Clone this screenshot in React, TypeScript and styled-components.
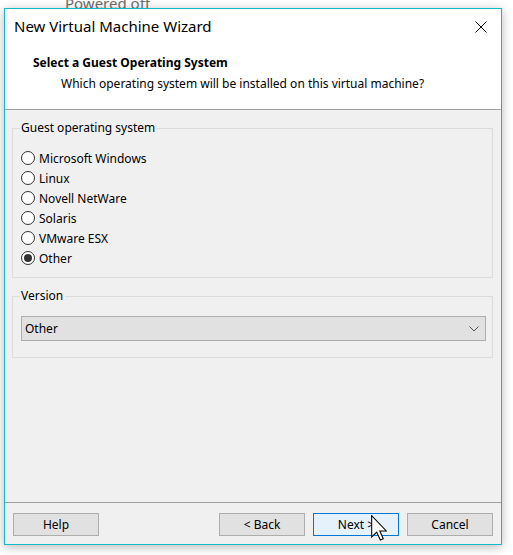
import React, { useState } from "react";
import styled, { createGlobalStyle } from "styled-components";

const GlobalStyle = createGlobalStyle`
  html, body { margin: 0; padding: 0; background: #ffffff; }
  body { font-family: "Noto Sans", "Open Sans", sans-serif; font-size: 12px; color: #000; }
  * { box-sizing: border-box; }
`;

const Page = styled.div`
  position: relative;
  width: 513px;
  height: 555px;
  padding: 8px 0 0 4px;
  overflow: hidden;
  background: #ffffff;
`;

const BackdropLabel = styled.div`
  position: absolute;
  left: 65px;
  top: -6px;
  font-size: 15px;
  line-height: 18px;
  color: #6e6e6e;
`;

const Window = styled.div`
  position: relative;
  width: 498px;
  height: 537px;
  border: 1px solid #18b7c8;
  background: #f0f0f0;
  box-shadow: 0 2px 10px rgba(0, 0, 0, 0.28);
  display: flex;
  flex-direction: column;
`;

const Header = styled.div`
  background: #ffffff;
  height: 101px;
  border-bottom: 1px solid #a0a0a0;
  display: flex;
  flex-direction: column;
`;

const TitleBar = styled.div`
  height: 34px;
  display: flex;
  align-items: center;
  justify-content: space-between;
  padding: 0 14px 0 9px;
`;

const TitleText = styled.div`
  font-size: 15px;
  color: #000;
`;

const CloseButton = styled.div`
  width: 12px;
  height: 12px;
  display: flex;
  margin-top: 2px;
`;

const Heading = styled.div`
  font-weight: bold;
  font-size: 12px;
  margin: 11px 0 0 28px;
`;

const Subheading = styled.div`
  font-size: 12px;
  margin: 4px 0 0 56px;
`;

const Body = styled.div`
  flex: 1;
  padding: 10px 8px 0 7px;
  display: flex;
  flex-direction: column;
  gap: 10px;
`;

const Group = styled.fieldset<{ $height: number }>`
  margin: 0;
  padding: 0 0 0 8px;
  border: 1px solid #dcdcdc;
  height: ${(p) => p.$height}px;
  min-width: 0;
`;

const Legend = styled.legend`
  padding: 0 2px 0 1px;
  margin-left: -1px;
  font-size: 12px;
  line-height: 16px;
  color: #000;
`;

const RadioList = styled.div`
  display: flex;
  flex-direction: column;
  margin-top: 12px;
`;

const RadioRow = styled.label`
  display: flex;
  align-items: center;
  height: 20px;
  gap: 4px;
  cursor: default;
`;

const RadioCircle = styled.span<{ $checked: boolean }>`
  width: 14px;
  height: 14px;
  border-radius: 50%;
  border: 1px solid #333333;
  background: #ffffff;
  display: flex;
  align-items: center;
  justify-content: center;
  &::after {
    content: "";
    width: 8px;
    height: 8px;
    border-radius: 50%;
    background: ${(p) => (p.$checked ? "#333333" : "transparent")};
  }
`;

const RadioText = styled.span`
  font-size: 12px;
`;

const Select = styled.div`
  margin-top: 12px;
  width: 465px;
  height: 25px;
  background: #e1e1e1;
  border: 1px solid #adadad;
  display: flex;
  align-items: center;
  justify-content: space-between;
  padding: 0 6px 0 3px;
  font-size: 12px;
`;

const Footer = styled.div`
  height: 42px;
  border-top: 1px solid #a0a0a0;
  display: flex;
  align-items: flex-start;
  padding: 10px 8px 0 8px;
  gap: 8px;
`;

const Spacer = styled.div`
  flex: 1;
`;

const Button = styled.div<{ $focused?: boolean }>`
  position: relative;
  width: 86px;
  height: 23px;
  border: 1px solid ${(p) => (p.$focused ? "#0078d7" : "#adadad")};
  background: ${(p) => (p.$focused ? "#e5f1fb" : "#e1e1e1")};
  display: flex;
  align-items: center;
  justify-content: center;
  font-size: 12px;
`;

const Cursor = styled.svg`
  position: absolute;
  left: 57px;
  top: 1px;
`;

const options = ["Microsoft Windows", "Linux", "Novell NetWare", "Solaris", "VMware ESX", "Other"];

export default function App() {
  const [selected, setSelected] = useState("Other");
  return (
    <>
      <GlobalStyle />
      <Page>
        <BackdropLabel>Powered off</BackdropLabel>
        <Window>
          <Header>
            <TitleBar>
              <TitleText>New Virtual Machine Wizard</TitleText>
              <CloseButton>
                <svg width="12" height="12" viewBox="0 0 12 12">
                  <path d="M0.5 0.5 L11.5 11.5 M11.5 0.5 L0.5 11.5" stroke="#000" strokeWidth="1" fill="none" />
                </svg>
              </CloseButton>
            </TitleBar>
            <Heading>Select a Guest Operating System</Heading>
            <Subheading>Which operating system will be installed on this virtual machine?</Subheading>
          </Header>
          <Body>
            <Group $height={158}>
              <Legend>Guest operating system</Legend>
              <RadioList>
                {options.map((o) => (
                  <RadioRow key={o} onClick={() => setSelected(o)}>
                    <RadioCircle $checked={selected === o} />
                    <RadioText>{o}</RadioText>
                  </RadioRow>
                ))}
              </RadioList>
            </Group>
            <Group $height={70}>
              <Legend>Version</Legend>
              <Select>
                <span>Other</span>
                <svg width="10" height="6" viewBox="0 0 10 6">
                  <path d="M0.5 0.5 L5 5 L9.5 0.5" stroke="#555" strokeWidth="1" fill="none" />
                </svg>
              </Select>
            </Group>
          </Body>
          <Footer>
            <Button>Help</Button>
            <Spacer />
            <Button>&lt; Back</Button>
            <Button $focused>
              Next &gt;
              <Cursor width="16" height="26" viewBox="0 0 12 19.5">
                <path
                  d="M0.5 0.5 L0.5 16.5 L4.3 12.8 L7 18.8 L9.2 17.8 L6.6 12 L11.5 12 Z"
                  fill="#ffffff"
                  stroke="#000000"
                  strokeWidth="0.8"
                  strokeLinejoin="miter"
                />
              </Cursor>
            </Button>
            <Button>Cancel</Button>
          </Footer>
        </Window>
      </Page>
    </>
  );
}
